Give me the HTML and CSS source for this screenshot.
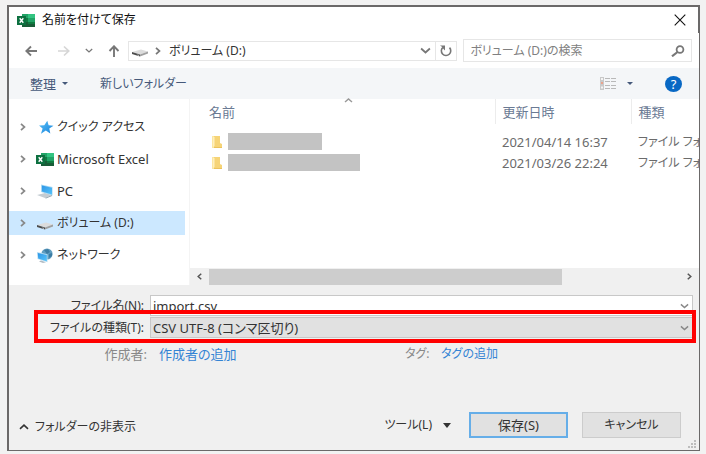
FILE: index.html
```html
<!DOCTYPE html>
<html lang="ja">
<head>
<meta charset="utf-8">
<meta name="viewport" content="width=device-width, initial-scale=1">
<title>名前を付けて保存</title>
<link rel="stylesheet" href="styles.css">
</head>
<body>
<svg class="defs" aria-hidden="true">
  <defs>
    <linearGradient id="star-fill" x1="0" y1="0" x2="1" y2="1"><stop offset="0" stop-color="#5cc0f5"/><stop offset="1" stop-color="#1583dd"/></linearGradient>
    <linearGradient id="screen-fill" x1="0" y1="0" x2="1" y2="1"><stop offset="0" stop-color="#2f96e6"/><stop offset="1" stop-color="#55c3fa"/></linearGradient>
    <symbol id="excel" viewBox="0 0 18 15">
      <path fill="#21a366" d="M5 1h6v4H5z"/><path fill="#33c481" d="M11 1h7v4h-7z"/>
      <path fill="#107c41" d="M5 5h6v4H5z"/><path fill="#21a366" d="M11 5h7v4h-7z"/>
      <path fill="#185c37" d="M5 9h13v5H5z"/><path fill="#107c41" d="M11 9h7v2h-7z"/>
      <path fill="#0d7040" d="M0 3h9v9H0z"/>
      <path stroke="#fff" stroke-width="1.4" d="M2.700 5.200l3.600 4.600M6.300 5.200L2.700 9.800"/>
    </symbol>
    <symbol id="drive" viewBox="0 0 18 15">
      <path fill="#dcdcdc" d="M1 9l9-2.500 7 2-8 3z"/>
      <path fill="#4d4d4d" d="M1 9l8 2.500v2L1 11z"/>
      <path fill="#a0a0a0" d="M9 11.500l8-3v2l-8 3z"/>
      <path fill="#eee" d="M6.500 11.500l1.500.5v.8l-1.500-.5z"/>
    </symbol>
    <symbol id="chevron" viewBox="0 0 8 8"><path fill="none" stroke="currentColor" stroke-width="1.700" d="M2 .8L5.500 4 2 7.200"/></symbol>
    <symbol id="down" viewBox="0 0 10 8"><path fill="none" stroke="currentColor" stroke-width="1.600" d="M1 2.200l4 3.600 4-3.600"/></symbol>
    <symbol id="folder" viewBox="0 0 12 14">
      <path fill="#fbe6a2" d="M1 1h4v12H1z"/><path fill="#f6d477" d="M3 1h6v7l2 1v4H3z"/><path fill="#e9bd55" d="M3 12.200h8V13H3z"/><path fill="#fff0bd" d="M2 2h1.500v9L2 12z"/>
    </symbol>
  </defs>
</svg>
<main class="dialog">
  <header class="titlebar">
    <svg class="icon"><use href="#excel"/></svg>
    <h1>名前を付けて保存</h1>
    <button class="plain close" aria-label="閉じる"><svg viewBox="0 0 12 12"><path fill="none" stroke="#111" stroke-width="1.100" d="M.7.7l10.600 10.600M11.300.7L.7 11.300"/></svg></button>
  </header>

  <nav class="navbar" aria-label="場所">
    <div class="history">
      <button class="plain" aria-label="戻る"><svg class="arrow" viewBox="0 0 12 12"><path fill="none" stroke="#777" stroke-width="1.900" d="M12 6H1.500M6 1.500L1.300 6 6 10.500"/></svg></button>
      <button class="plain" aria-label="進む" disabled><svg class="arrow" viewBox="0 0 12 12"><path fill="none" stroke="#d6d6d6" stroke-width="1.700" d="M0 6h10.500M6 1.500L10.700 6 6 10.500"/></svg></button>
      <button class="plain" aria-label="履歴"><svg class="small-down"><use href="#down"/></svg></button>
      <button class="plain" aria-label="上へ"><svg class="arrow" viewBox="0 0 12 12"><path fill="none" stroke="#777" stroke-width="1.900" d="M6 12V1.500M1.500 6L6 1.300 10.500 6"/></svg></button>
    </div>
    <div class="address">
      <svg class="icon"><use href="#drive"/></svg>
      <svg class="chev"><use href="#chevron"/></svg>
      <span class="crumb kana">ボリューム (D:)</span>
      <button class="plain" aria-label="場所の一覧"><svg class="wide-down"><use href="#down"/></svg></button>
      <button class="plain refresh" aria-label="更新"><svg viewBox="0 0 12 12"><path fill="none" stroke="#777" stroke-width="1.600" d="M2.900 2.300A4.700 4.700 0 1 0 9.500 2.600"/><path fill="#777" d="M0 .5h5v5L3.500 4 2.200 2z"/></svg></button>
    </div>
    <div class="search">
      <input class="kana" type="search" aria-label="検索" placeholder="ボリューム (D:)の検索">
      <svg viewBox="0 0 14 12"><circle cx="9" cy="4.500" r="3.400" fill="none" stroke="#777" stroke-width="1.800"/><path stroke="#777" stroke-width="2.200" d="M6.500 7L1 11.300"/></svg>
    </div>
  </nav>

  <div class="toolbar">
    <button class="plain organize">整理<span class="tri"></span></button>
    <button class="plain kana">新しいフォルダー</button>
    <button class="plain view" aria-label="表示方法"><svg viewBox="0 0 16 13"><path fill="#c9c9c9" d="M0 0h4v13H0z"/><path fill="#e9a28c" d="M1 5h2v2H1z"/><path fill="#f4f4f4" d="M1 1h2v2H1zM1 9.500h2v2H1z"/><path stroke="#b9b9b9" d="M5 1.500h5M11 1.500h5M5 4.500h5M11 4.500h5M5 8.500h5M11 8.500h5M5 11.500h5M11 11.500h5"/></svg><span class="tri"></span></button>
    <button class="plain help" aria-label="ヘルプ">?</button>
  </div>

  <div class="browser">
    <aside class="tree">
      <a class="kana" href="#quick"><svg class="chev"><use href="#chevron"/></svg><svg class="icon" viewBox="0 0 18 15"><path fill="url(#star-fill)" d="M11.300.8l1.300 4.500 4.900.4-4.200 2.800 1 5L9.800 10.600 5 13.800l1.600-5.200L3 5.600l5.300-.4z"/></svg>クイック アクセス</a>
      <a href="#excel-files"><svg class="chev"><use href="#chevron"/></svg><svg class="icon"><use href="#excel"/></svg>Microsoft Excel</a>
      <a href="#pc"><svg class="chev"><use href="#chevron"/></svg><svg class="icon" viewBox="0 0 18 15"><path fill="#c4ccd2" d="M1 11l8-2 7 2-7 3z"/><path fill="#8fa0ac" d="M9 14l7-3v1l-6 2.500z"/><path fill="#a8d8f3" d="M5 .5L16.500 3v8.500L5 8z"/><path fill="url(#screen-fill)" d="M6 1.500l10 2.200v6.800L6 7.500z"/></svg>PC</a>
      <a class="kana selected" href="#volume" aria-current="true"><svg class="chev"><use href="#chevron"/></svg><svg class="icon"><use href="#drive"/></svg>ボリューム (D:)</a>
      <a class="kana" href="#network"><svg class="chev"><use href="#chevron"/></svg><svg class="icon" viewBox="0 0 18 15"><circle cx="11" cy="6" r="5.600" fill="#5f9dc0"/><path fill="#3c7ca3" d="M8 2l4-1 2 3-3 2zM13 6l3-1v3l-3 2z"/><path fill="#b7dff5" d="M1 4l10.500 2.300v8L1.500 11z"/><path fill="url(#screen-fill)" d="M1.800 5l9 2v6.200L2.200 10.500z"/><path fill="#b1bcc4" d="M5 12.500l5 1.700-3 .8-4-1.500z"/></svg>ネットワーク</a>
    </aside>
    <section class="files">
      <svg class="sort"><use href="#down"/></svg>
      <div class="listing">
        <table>
          <colgroup><col><col class="date"><col class="kind"></colgroup>
          <thead><tr><th scope="col">名前</th><th scope="col">更新日時</th><th scope="col">種類</th></tr></thead>
          <tbody>
            <tr><td><div class="entry"><svg><use href="#folder"/></svg><span class="redacted short"></span></div></td><td>2021/04/14 16:37</td><td class="kana">ファイル フォ</td></tr>
            <tr><td><div class="entry"><svg><use href="#folder"/></svg><span class="redacted long"></span></div></td><td>2021/03/26 22:24</td><td class="kana">ファイル フォ</td></tr>
          </tbody>
        </table>
      </div>
      <div class="scrollbar">
        <button class="plain" aria-label="左へ"><svg class="scroll-left"><use href="#chevron"/></svg></button>
        <div class="track"><div class="thumb"></div></div>
        <button class="plain" aria-label="右へ"><svg><use href="#chevron"/></svg></button>
      </div>
    </section>
  </div>

  <form class="details">
    <div class="field">
      <label class="kana" for="filename">ファイル名(N):</label>
      <div class="combo"><input id="filename" type="text" value="import.csv"><svg><use href="#down"/></svg></div>
    </div>
    <div class="field highlighted">
      <label class="kana" for="filetype">ファイルの種類(T):</label>
      <div class="combo"><select id="filetype"><option>CSV UTF-8 (コンマ区切り)</option></select><svg><use href="#down"/></svg></div>
    </div>
    <div class="meta">
      <span>作成者:</span><a href="#author">作成者の追加</a>
      <span class="kana">タグ:</span><a class="kana" href="#tag">タグの追加</a>
    </div>
    <footer class="actions">
      <button type="button" class="plain kana hide"><svg><use href="#down"/></svg>フォルダーの非表示</button>
      <button type="button" class="plain kana tools">ツール(L)<span class="tri"></span></button>
      <button type="button" class="push primary">保存(S)</button>
      <button type="button" class="push kana">キャンセル</button>
    </footer>
    <svg class="grip" viewBox="0 0 10 8"><path fill="#bdbdbd" d="M7 0h2v2H7zM4 3h2v2H4zM7 3h2v2H7zM1 6h2v2H1zM4 6h2v2H4zM7 6h2v2H7z"/></svg>
  </form>
</main>
</body>
</html>
```
FILE: styles.css
```css
* { box-sizing: border-box; }

body {
  margin: 0;
  padding: 5px 6px 3px 7px;
  background: #f2f2f2;
  color: #333;
  font: 13px/20px "Noto Sans", "Noto Sans CJK JP", sans-serif;
  font-feature-settings: "palt";
}

button, input, select { font: inherit; font-feature-settings: inherit; color: inherit; }
a { text-decoration: none; }
svg { display: block; flex: none; }
.defs { position: absolute; width: 0; height: 0; }

.kana { font-size: 12px; }

.plain {
  display: flex;
  align-items: center;
  justify-content: center;
  padding: 0;
  border: 0;
  background: none;
  white-space: nowrap;
}

.icon { width: 18px; height: 15px; }
.chev { width: 8px; height: 10px; color: #777; }
.tri { border: 3px solid transparent; border-top-color: currentColor; border-bottom: 0; }

.dialog {
  border: 2px solid #6b6969;
  border-width: 2px 1px 1px 2px;
  background: #fff;
}

.titlebar {
  display: flex;
  align-items: center;
  height: 26px;
  padding: 0 12px 0 8px;
  border-right: 1px solid #6b6969;
}
.titlebar h1 { flex: 1; margin: 0 0 0 7px; font-size: 12px; font-weight: 400; color: #111; }
.close svg { width: 12px; height: 12px; }

.navbar { display: flex; align-items: center; height: 35px; padding: 0 7px 0 16px; }
.history { display: flex; flex: none; align-items: center; width: 103px; gap: 15px; }
.history button:nth-child(2) { margin-left: 6px; }
.arrow { width: 12px; height: 12px; }
.small-down { width: 8px; height: 7px; color: #777; }
.wide-down { width: 11px; height: 9px; color: #777; }
.address {
  display: flex;
  align-items: center;
  flex: 329 1 0;
  height: 20px;
  padding-left: 2px;
  border: 1px solid #e6e6e6;
}
.address .chev { margin: 0 7px 0 5px; }
.crumb { flex: 1; }
.refresh { width: 21px; height: 18px; margin-left: 4px; border-left: 1px solid #e6e6e6; }
.refresh svg { width: 12px; height: 12px; }
.search {
  display: flex;
  align-items: center;
  flex: 217 1 0;
  height: 23px;
  margin-left: 6px;
  padding: 0 6px;
  border: 1px solid #e6e6e6;
}
.search input { flex: 1; min-width: 0; padding: 0; border: 0; outline: 0; background: none; appearance: none; }
.search input::placeholder { color: #808080; opacity: 1; }
.search svg { width: 14px; height: 12px; }

.toolbar {
  display: flex;
  align-items: center;
  height: 31px;
  padding: 0 17px 0 21px;
  background: #f4f6f8;
  color: #45597a;
}
.organize { gap: 6px; margin-right: 32px; }
.view { gap: 11px; margin: 0 32px 0 auto; }
.view svg { width: 16px; height: 13px; }
.help { width: 17px; height: 16px; border-radius: 50%; background: #0868c4; color: #fff; }

.browser { display: flex; height: 186px; }
.tree {
  display: flex;
  flex-direction: column;
  gap: 8px;
  width: 181px;
  padding: 16px 4px 0 0;
  border-right: 1px solid #f4f4f4;
}
.tree a { display: flex; align-items: center; height: 24px; padding-left: 10px; color: #333; }
.tree .chev { margin-right: 9px; color: #888; }
.tree .icon { margin-right: 3px; }
.tree .selected { background: #cce8ff; }

.files { position: relative; display: flex; flex-direction: column; flex: 1; min-width: 0; }
.sort { position: absolute; top: -2px; left: 154px; width: 9px; height: 7px; color: #999; transform: rotate(180deg); }
.listing { flex: 1; overflow: hidden; }
table { width: 100%; border-collapse: collapse; table-layout: fixed; color: #6b6b6b; }
.date { width: 136px; }
.kind { width: 68px; }
th {
  height: 25px;
  padding: 1px 0 0 7px;
  border-left: 1px solid #ececec;
  color: #6a7a94;
  font-weight: 400;
  text-align: left;
}
th:first-child { padding-left: 19px; border-left: 0; }
tbody::before { content: ""; display: block; height: 7px; }
td { height: 21px; padding: 0 0 0 7px; white-space: nowrap; }
td:first-child { padding-left: 21px; }
.entry { display: flex; align-items: center; gap: 5px; }
.entry svg { width: 12px; height: 14px; }
.redacted { height: 17px; background: #c3c3c3; }
.short { width: 94px; }
.long { width: 132px; }

.scrollbar { display: flex; align-items: center; height: 17px; background: #f0f0f0; }
.scrollbar button { width: 19px; color: #555; }
.scrollbar svg { width: 7px; height: 7px; }
.scroll-left { transform: scaleX(-1); }
.track { flex: 1; }
.thumb { width: 75%; height: 16px; background: #cdcdcd; }

.details { position: relative; padding: 10px 6px 12px 0; background: #f0f0f0; }
.field { position: relative; display: flex; align-items: center; height: 21px; }
.field + .field { margin-top: 1px; }
.field label { width: 135px; margin-right: 6px; text-align: right; }
.combo { display: grid; flex: 1; align-items: center; height: 21px; }
.combo > * { grid-area: 1 / 1; }
.combo input, .combo select {
  width: 100%;
  height: 21px;
  margin: 0;
  padding: 0 20px 0 2px;
  border: 1px solid #c8c8c8;
  border-radius: 0;
  outline: 0;
  background: #fff;
  appearance: none;
}
.combo select { background: #e1e1e1; }
.combo svg { justify-self: end; width: 9px; height: 8px; margin-right: 4px; color: #888; pointer-events: none; }
.highlighted::after {
  content: "";
  position: absolute;
  inset: -7px -3px -5px 25px;
  border: 4px solid #f00;
  pointer-events: none;
}

.meta { display: grid; grid-template-columns: 138px 234px 24px 1fr; align-items: center; height: 32px; column-gap: 12px; color: #888; }
.meta span { text-align: right; white-space: nowrap; }
.meta a { color: #3484d4; }

.actions { display: flex; align-items: center; height: 26px; margin-top: 42px; padding: 0 12px 0 10px; }
.hide { gap: 6px; margin-top: 4px; }
.hide svg { width: 10px; height: 8px; }
.hide svg { transform: rotate(180deg); }
.tools { gap: 11px; margin: 0 18px 0 auto; }
.tools .tri { border-width: 5px 4px 0; }
.push { width: 99px; height: 26px; padding: 0; border: 1px solid #ccc; background: #e1e1e1; }
.primary { margin-right: 14px; border: 2px solid #66aee8; }
.grip { position: absolute; right: 2px; bottom: 2px; width: 10px; height: 8px; }
```
